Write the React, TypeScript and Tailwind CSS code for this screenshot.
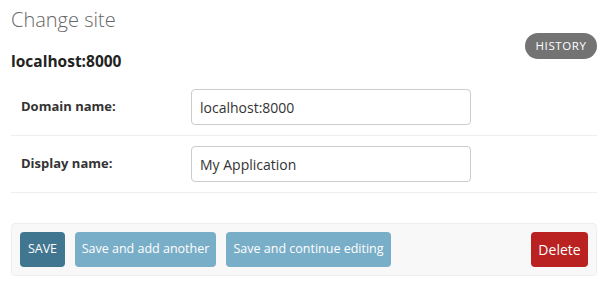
import React from "react";

export default function App() {
  const font = { fontFamily: '"Open Sans", "Noto Sans", sans-serif' };
  return (
    <div className="w-[609px] h-[289px] bg-white text-[#333] overflow-hidden" style={font}>
      <div className="pl-[11px] pr-[12px] w-[609px]">
        <div className="flex justify-between">
          <div className="flex flex-col">
            <h1 className="pt-[6px] h-[34px] text-[20px] leading-[28px] font-light text-[#666]">Change site</h1>
            <h2 className="mt-[17px] text-[15.5px] leading-[20px] font-bold text-[#222]">localhost:8000</h2>
          </div>
          <div className="mt-[32px]">
            <span className="inline-flex h-[26px] w-[72px] justify-center items-center rounded-full bg-[#737373] text-[11.5px] tracking-[0.6px] text-white">
              HISTORY
            </span>
          </div>
        </div>

        <div className="mt-[8px] w-[586px]">
          {[
            ["Domain name:", "localhost:8000"],
            ["Display name:", "My Application"],
          ].map(([label, value]) => (
            <div key={label} className="flex items-center p-[10px] border-b border-[#eee]">
              <label className="w-[170px] text-[13px] font-bold text-[#333]">{label}</label>
              <div className="w-[280px] h-[36px] flex items-center rounded-[4px] border border-[#ccc] px-[8px] text-[14px] text-[#333]">
                {value}
              </div>
            </div>
          ))}
        </div>

        <div className="mt-[30px] w-[586px] h-[53px] flex items-center gap-[10px] rounded-[4px] border border-[#eee] bg-[#f8f8f8] px-[8px] text-[12.5px] text-white">
          <span className="h-[35px] w-[45px] flex justify-center items-center rounded-[4px] bg-[#417690]">SAVE</span>
          <span className="h-[35px] w-[141px] flex justify-center items-center rounded-[4px] bg-[#79aec8]">Save and add another</span>
          <span className="h-[35px] w-[165px] flex justify-center items-center rounded-[4px] bg-[#79aec8]">Save and continue editing</span>
          <span className="ml-auto h-[35px] w-[57px] flex justify-center items-center rounded-[4px] bg-[#ba2121] text-[14px]">Delete</span>
        </div>
      </div>
    </div>
  );
}
